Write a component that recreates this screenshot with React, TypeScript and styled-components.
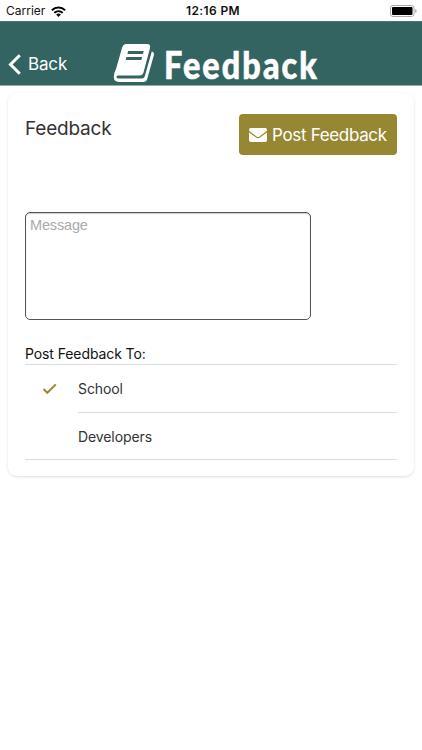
import React from 'react';
import styled, { createGlobalStyle } from 'styled-components';

const Global = createGlobalStyle`
  * { box-sizing: border-box; }
  body { margin: 0; background: #fff; font-family: Inter, Roboto, sans-serif; color: #333; }
`;

const Screen = styled.div`
  width: 422px;
  height: 750px;
  overflow: hidden;
  background: #fff;
`;

const StatusBar = styled.div`
  height: 21px;
  display: grid;
  grid-template-columns: 1fr auto 1fr;
  align-items: center;
  padding: 1px 5px 0 6px;
  color: #111;
  font-size: 12px;
  line-height: 20px;
`;

const Carrier = styled.div`
  display: flex;
  align-items: center;
  gap: 6px;
  letter-spacing: 0;
`;

const Clock = styled.div`
  font-weight: 600;
  letter-spacing: 0.4px;
  padding-left: 3px;
`;

const BatterySlot = styled.div`
  display: flex;
  justify-content: flex-end;
`;

const NavBar = styled.header`
  height: 65px;
  display: flex;
  align-items: flex-start;
  background: #336461;
  color: #fff;
  border-top: 1px solid #4b7774;
  border-bottom: 1px solid #93adac;
`;

const BackButton = styled.button`
  display: flex;
  align-items: center;
  gap: 7px;
  width: 113px;
  margin: 31px 0 0;
  padding: 0 0 0 8px;
  border: 0;
  background: none;
  color: inherit;
  font: 400 17px/22px Inter, sans-serif;
  letter-spacing: -0.15px;
`;

const Title = styled.h1`
  display: flex;
  align-items: flex-start;
  margin: 21px 0 0;
  height: 41px;
`;

const TitleText = styled.span`
  margin-left: 9px;
  font: 900 38.5px/42px Lato, sans-serif;
  letter-spacing: 2.5px;
  white-space: nowrap;
  -webkit-text-stroke: 0.6px #fff;
  transform: scaleX(0.84);
  transform-origin: left center;
`;

const Card = styled.main`
  margin: 7px 8px 0;
  height: 383px;
  padding: 21px 17px 0;
  border-radius: 9px;
  background: #fff;
  box-shadow: 0 1px 3px rgba(0, 0, 0, 0.13);
`;

const CardHeader = styled.div`
  display: flex;
  justify-content: space-between;
  align-items: flex-start;
  height: 98px;
`;

const Heading = styled.h2`
  margin: 0;
  font-size: 19px;
  font-weight: 400;
  line-height: 29px;
  letter-spacing: -0.2px;
  color: #333;
`;

const PostButton = styled.button`
  display: flex;
  align-items: center;
  gap: 5px;
  width: 158px;
  height: 41px;
  padding: 0 0 0 10px;
  border: 0;
  border-radius: 4px;
  background: #968833;
  color: #fff;
  font: 400 17px/22px Inter, sans-serif;
  letter-spacing: -0.33px;
  white-space: nowrap;
`;

const Message = styled.textarea`
  display: block;
  width: 286px;
  height: 108px;
  padding: 4px;
  border: 1px solid #555;
  border-radius: 5px;
  resize: none;
  outline: 0;
  background: #fff;
  box-shadow: inset 0 1px 1px #ccc;
  font: 400 14.5px/17px "Liberation Sans", sans-serif;
  letter-spacing: -0.15px;
  &::placeholder { color: #aaa; opacity: 1; }
`;

const ListLabel = styled.div`
  margin-top: 24px;
  height: 20px;
  font-size: 14px;
  line-height: 19px;
  letter-spacing: -0.1px;
  color: #111;
`;

const List = styled.div`
  border-top: 1px solid #dcdcdc;
  border-bottom: 1px solid #dcdcdc;
`;

const Row = styled.div`
  display: grid;
  grid-template-columns: 53px 1fr;
`;

const Mark = styled.div`
  display: flex;
  align-items: center;
  padding-left: 17px;
`;

const Label = styled.div<{ $divided?: boolean }>`
  height: ${p => (p.$divided ? 48 : 46)}px;
  border-bottom: ${p => (p.$divided ? '1px solid #dcdcdc' : '0')};
  font-size: 14px;
  line-height: 47px;
  letter-spacing: -0.1px;
  color: #333;
`;

const WifiIcon = () => (
  <svg width="15" height="11" viewBox="0 0 15 11" fill="none" stroke="#000" strokeWidth="2">
    <path d="M.9 4.3C4.7.7 10.300.7 14.100 4.300M3.300 6.900C5.700 4.600 9.300 4.600 11.700 6.900" />
    <path d="M5.100 8.500Q7.500 6.500 9.900 8.500L7.500 10.900Z" fill="#000" stroke="none" />
  </svg>
);

const BatteryIcon = () => (
  <svg width="27" height="12" viewBox="0 0 27 12">
    <rect x=".5" y=".5" width="23.500" height="11" rx="2.500" fill="none" stroke="#aaa" />
    <rect x="2" y="2" width="20.500" height="8" rx="1" fill="#000" />
    <path d="M25.300 4v4q1.300-.6 1.300-2t-1.300-2z" fill="#999" />
  </svg>
);

const ChevronIcon = () => (
  <svg width="13" height="21" viewBox="0 0 13 21" fill="none" stroke="#fff" strokeWidth="3">
    <path d="M11.800 1.200L2.500 10.500L11.800 19.800" />
  </svg>
);

const BookIcon = () => (
  <svg width="42" height="40" viewBox="0 0 42 40">
    <path
      fill="#fff"
      fillRule="evenodd"
      d="M12.500 1H34Q38 1 37 5L30.500 29.500Q29.500 32.500 26.500 32.500H5Q3.200 32.500 3.400 34.200Q3.800 35.500 6 35.500H29Q31 35.500 31.700 33.500L38.800 8.500Q41.700 9.500 40.900 12L34.200 36Q33.200 39 30.200 39H6Q.5 38.500.8 33.500Q1 30 3 26L9 5Q10 1.500 12.500 1ZM15.200 8L14.400 11H30L30.700 8ZM13.400 14L12.600 17H28.400L29.100 14Z"
    />
  </svg>
);

const EnvelopeIcon = () => (
  <svg width="18" height="14" viewBox="0 0 18 14" fill="#fff">
    <path d="M1.700 0H16.300Q18 0 18 1.700Q18 2.900 16.800 3.800L10.500 8.400Q9 9.400 7.500 8.400L1.200 3.800Q0 2.900 0 1.700Q0 0 1.700 0Z" />
    <path d="M0 4.400L7 9.500Q9 10.900 11 9.500L18 4.400V12.300Q18 14 16.300 14H1.700Q0 14 0 12.300Z" />
  </svg>
);

const CheckIcon = () => (
  <svg width="15" height="12" viewBox="0 0 15 12" fill="none" stroke="#968833" strokeWidth="2">
    <path d="M1.500 6L5.300 9.800L13.800 1.400" />
  </svg>
);

export default function App() {
  return (
    <>
      <Global />
      <Screen>
        <StatusBar>
          <Carrier>Carrier <WifiIcon /></Carrier>
          <Clock>12:16 PM</Clock>
          <BatterySlot><BatteryIcon /></BatterySlot>
        </StatusBar>
        <NavBar>
          <BackButton><ChevronIcon />Back</BackButton>
          <Title><BookIcon /><TitleText>Feedback</TitleText></Title>
        </NavBar>
        <Card>
          <CardHeader>
            <Heading>Feedback</Heading>
            <PostButton><EnvelopeIcon />Post Feedback</PostButton>
          </CardHeader>
          <Message placeholder="Message" />
          <ListLabel>Post Feedback To:</ListLabel>
          <List>
            <Row>
              <Mark><CheckIcon /></Mark>
              <Label $divided>School</Label>
            </Row>
            <Row>
              <Mark />
              <Label>Developers</Label>
            </Row>
          </List>
        </Card>
      </Screen>
    </>
  );
}
